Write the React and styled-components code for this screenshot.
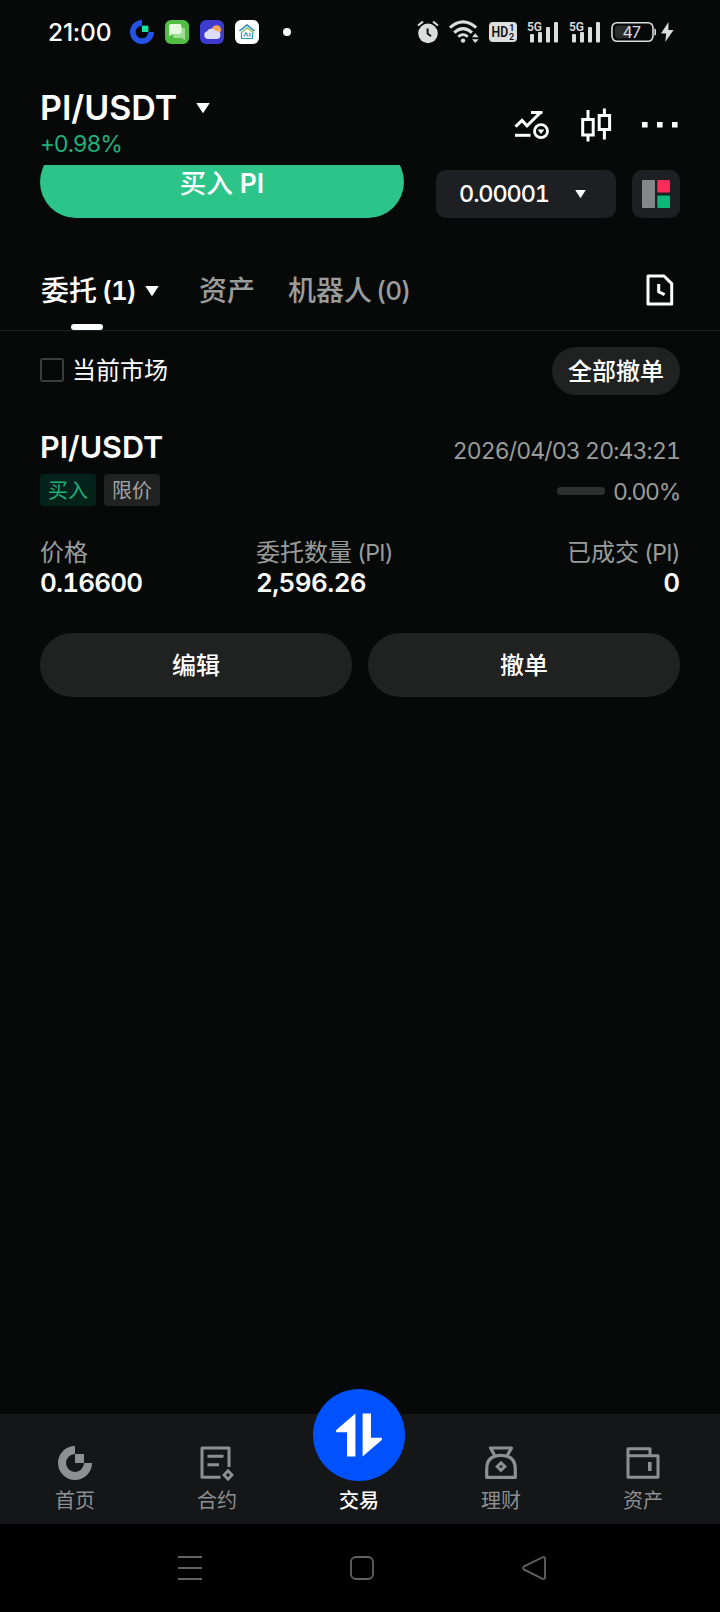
import React from "react";
import styled, { createGlobalStyle } from "styled-components";

const GlobalStyle = createGlobalStyle`
  * { box-sizing: border-box; }
  body {
    margin: 0;
    background: #060908;
    color: #fff;
    font-family: Inter, "Noto Sans CJK SC", sans-serif;
    font-variant-numeric: tabular-nums;
  }
  svg { display: block; flex: none; overflow: visible; }
  button { font: inherit; color: inherit; border: 0; padding: 0; background: none; }
`;

const Screen = styled.div`
  display: flex;
  flex-direction: column;
  width: 720px;
  height: 1612px;
  overflow: hidden;
  background: #060908;
`;

const Text = styled.span`
  display: block;
  white-space: nowrap;
  font-size: ${(p) => p.$size}px;
  line-height: ${(p) => p.$line || 32}px;
  font-weight: ${(p) => p.$weight || 400};
  color: ${(p) => p.$color || "#fff"};
  letter-spacing: ${(p) => p.$track || 0}px;
  padding-top: ${(p) => p.$drop || 0}px;
`;

/* Latin run that follows Chinese text in the same label */
const Latin = styled.span`
  margin-left: ${(p) => p.$gap}px;
  font-size: ${(p) => p.$size}px;
  font-weight: ${(p) => p.$weight || "inherit"};
  letter-spacing: ${(p) => p.$track || 0}px;
  vertical-align: ${(p) => p.$rise || 0}px;
  line-height: 1;
`;

/* Status bar */
const StatusBar = styled.div`
  display: flex;
  align-items: center;
  justify-content: space-between;
  height: 64px;
  padding: 0 45px 0 48px;
`;

const Clock = styled(Text)`
  width: 82px;
  font-variant-numeric: normal;
`;

const StatusGroup = styled.div`
  display: flex;
  align-items: center;
  gap: ${(p) => p.$gap}px;
`;

const NoticeDot = styled.i`
  width: 8px;
  height: 8px;
  margin-left: 13px;
  border-radius: 50%;
  background: #fff;
`;

/* Header */
const Header = styled.header`
  display: flex;
  justify-content: space-between;
  height: 101px;
  padding: 24px 42px 0 40px;
`;

const PairRow = styled.div`
  display: flex;
  align-items: center;
  gap: 19px;
`;

const HeaderActions = styled.div`
  display: flex;
  align-items: center;
  gap: 30px;
  height: 36px;
  margin-top: 19px;
`;

const Caret = ({ width, height }) => (
  <svg width={width} height={height} viewBox="0 0 14 10" preserveAspectRatio="none">
    <path d="M0.3 0H13.7L7.6 9.4Q7 10 6.4 9.4Z" fill="#fff" />
  </svg>
);

/* Order form strip, scrolled under the header */
const FormStrip = styled.section`
  display: flex;
  align-items: flex-end;
  height: 53px;
  padding: 0 40px;
  overflow: hidden;
`;

const BuyButton = styled.button`
  flex: none;
  display: flex;
  align-items: center;
  justify-content: center;
  width: 364px;
  height: 72px;
  margin-right: 32px;
  border-radius: 36px;
  background: #2dc489;
`;

const Select = styled.div`
  display: flex;
  align-items: center;
  justify-content: space-between;
  width: 180px;
  height: 48px;
  margin-right: 16px;
  padding: 0 30px 0 23px;
  border-radius: 10px;
  background: #1e1f23;
`;

const BookToggle = styled.button`
  display: flex;
  align-items: center;
  justify-content: center;
  width: 48px;
  height: 48px;
  border-radius: 10px;
  background: #1e1f23;
`;

/* Tabs */
const Tabs = styled.nav`
  display: flex;
  align-items: flex-start;
  height: 113px;
  padding: 53px 46px 0 41px;
  border-bottom: 1px solid #1d201f;
`;

const Tab = styled.div`
  display: flex;
  flex-direction: column;
  width: ${(p) => p.$width}px;
`;

const TabLabel = styled.div`
  display: flex;
  align-items: center;
  gap: 9px;
  height: 40px;
`;

const TabIndicator = styled.i`
  width: 32px;
  height: 6px;
  margin: 13px 0 0 30px;
  border-radius: 3px;
  background: #fff;
`;

const HistoryButton = styled.button`
  margin: 3px 0 0 auto;
`;

/* Orders */
const Orders = styled.main`
  flex: 1;
  padding: 16px 40px 0;
`;

const FilterRow = styled.div`
  display: flex;
  align-items: center;
  justify-content: space-between;
  height: 48px;
`;

const CheckLabel = styled.label`
  display: flex;
  align-items: center;
  gap: 8px;
`;

const CheckBox = styled.i`
  width: 24px;
  height: 24px;
  margin-top: -2px;
  border: 2px solid #3b3d3c;
  border-radius: 3px;
`;

const Pill = styled.button`
  display: flex;
  align-items: center;
  justify-content: center;
  flex: ${(p) => (p.$width ? "none" : "1")};
  width: ${(p) => (p.$width ? `${p.$width}px` : "auto")};
  height: ${(p) => p.$height}px;
  border-radius: 32px;
  background: #202221;
`;

const OrderHead = styled.div`
  display: flex;
  justify-content: space-between;
  height: 111px;
  padding-top: 34px;
`;

const Badges = styled.div`
  display: flex;
  gap: 8px;
  margin-top: 9px;
`;

const Badge = styled.span`
  width: 56px;
  height: 32px;
  border-radius: 4px;
  text-align: center;
  font-size: 20px;
  line-height: 34px;
  color: ${(p) => (p.$buy ? "#21b07c" : "#a0a2a1")};
  background: ${(p) => (p.$buy ? "#02221a" : "#212322")};
`;

const OrderMeta = styled.div`
  display: flex;
  flex-direction: column;
  align-items: flex-end;
  gap: 9px;
  padding-top: 5px;
`;

const Progress = styled.div`
  display: flex;
  align-items: center;
  gap: 8px;
`;

const ProgressTrack = styled.i`
  width: 48px;
  height: 8px;
  margin-top: -3px;
  border-radius: 4px;
  background: #2e3030;
`;

const Metrics = styled.div`
  display: grid;
  grid-template-columns: 216px 1fr auto;
  margin-top: 31px;
`;

const Metric = styled.div`
  text-align: ${(p) => (p.$end ? "right" : "left")};
`;

const Actions = styled.div`
  display: flex;
  gap: 16px;
  margin-top: 36px;
`;

/* Bottom navigation */
const BottomNav = styled.nav`
  display: grid;
  grid-template-columns: repeat(5, 142px);
  grid-template-rows: 110px;
  height: 110px;
  padding-left: 4px;
  background: #141617;
`;

const NavItem = styled.div`
  display: flex;
  flex-direction: column;
  align-items: center;
  justify-content: flex-end;
  gap: ${(p) => p.$gap || 5}px;
  padding-bottom: 7px;
`;

const TradeDisc = styled.div`
  display: flex;
  flex: none;
  align-items: center;
  justify-content: center;
  width: 92px;
  height: 92px;
  border-radius: 50%;
  background: #0052ff;
`;

const SystemNav = styled.footer`
  display: flex;
  align-items: center;
  gap: 148px;
  height: 88px;
  padding-left: 178px;
  background: #000;
`;

const BrandMark = ({ size, ring, square }) => (
  <svg width={size} height={size} viewBox="0 0 34 34">
    <path d="M17 0A17 17 0 1 0 34 17H26A9 9 0 1 1 17 8Z" fill={ring} />
    <path d="M17 8H26V17H17Z" fill={square} />
  </svg>
);

const MessagesIcon = () => (
  <svg width="24" height="24" viewBox="0 0 24 24">
    <rect width="24" height="24" rx="6" fill="#51bd42" />
    <path d="M11 8H19Q20 8 20 9V20L16.5 18H10Q8 18 8 16V11Z" fill="#9edc94" />
    <path d="M6 4H14.5Q16.5 4 16.5 6V12Q16.5 14 14.5 14H8L4 16V6Q4 4 6 4Z" fill="#e6f8e0" />
  </svg>
);

const WeatherIcon = () => (
  <svg width="24" height="24" viewBox="0 0 24 24">
    <rect width="24" height="24" rx="6" fill="#3d3bd0" />
    <circle cx="16.5" cy="9.8" r="4.6" fill="#f7a552" />
    <path d="M8 19A4 4 0 0 1 7 11.2A5 5 0 0 1 15.8 11A4 4 0 0 1 17 19Z" fill="#dedcf6" />
  </svg>
);

const HomeAiIcon = () => (
  <svg width="24" height="24" viewBox="0 0 24 24" fill="none">
    <rect width="24" height="24" rx="6" fill="#fff" />
    <path d="M4.5 11L12 5L19.5 11" stroke="#2b83c4" strokeWidth="1.6" />
    <path d="M7 12L12 8L19 13" stroke="#8cbf58" strokeWidth="1.5" />
    <path d="M6.5 12V18.5H17.5V13" stroke="#2f9fc0" strokeWidth="1.2" />
    <path d="M8.8 16.5L11 12.8L13.2 16.5M15 12.8V16.5" stroke="#2b83c4" strokeWidth="1.1" />
  </svg>
);

const AlarmIcon = () => (
  <svg width="22" height="24" viewBox="0 0 22 24" fill="none">
    <circle cx="11" cy="13.4" r="9.8" fill="#dcdedd" />
    <path d="M1 5.5L6 1.6M21 5.5L16 1.6" stroke="#dcdedd" strokeWidth="2" />
    <path d="M10.6 8.5V13.6L14 16.3" stroke="#111" strokeWidth="2" />
  </svg>
);

const WifiIcon = () => (
  <svg width="30" height="24" viewBox="0 0 30 24" fill="none" stroke="#dcdedd" strokeWidth="3">
    <path d="M1 7.7Q14 -4 27.2 7.7" />
    <path d="M5.2 12.6Q14 4.6 23 12.6" />
    <path d="M9.2 16.8Q14 12.6 18.8 16.8" strokeWidth="2.6" />
    <circle cx="14" cy="20.6" r="2.2" fill="#dcdedd" stroke="none" />
    <path d="M23 17.2L26.3 13.2L29.6 17.2ZM23 19.2H29.6L26.3 23Z" fill="#dcdedd" stroke="none" />
  </svg>
);

const HdIcon = () => (
  <svg width="28" height="20" viewBox="0 0 28 20">
    <rect width="28" height="20" rx="4" fill="#dcdedd" />
    <g fill="#111" fontFamily="Roboto, sans-serif" fontWeight="600">
      <text x="2.6" y="15.4" fontSize="15" textLength="16.6" lengthAdjust="spacingAndGlyphs">HD</text>
      <text x="20.2" y="9.2" fontSize="9">1</text>
      <text x="20" y="17.8" fontSize="9">2</text>
    </g>
  </svg>
);

const SignalIcon = () => (
  <svg width="32" height="24" viewBox="0 0 32 24" fill="#dcdedd">
    <text
      x="0"
      y="10.8"
      fontSize="13.5"
      fontFamily="Roboto, sans-serif"
      fontWeight="600"
      textLength="15"
      lengthAdjust="spacingAndGlyphs"
    >
      5G
    </text>
    <rect x="3" y="14" width="4" height="8.5" rx="1" />
    <rect x="11" y="12" width="4" height="10.5" rx="1" />
    <rect x="19" y="7" width="4" height="15.5" rx="1" />
    <rect x="27" y="2" width="4" height="20.5" rx="1" />
  </svg>
);

const BatteryIcon = () => (
  <svg width="64" height="22" viewBox="0 0 64 22">
    <rect x="1" y="1.7" width="41" height="18.6" rx="5" fill="none" stroke="#dcdedd" strokeWidth="1.6" />
    <path d="M7 4.4H18V17.6H7Q4 17.6 4 14.6V7.4Q4 4.4 7 4.4Z" fill="#2b2d2d" />
    <path d="M43.4 7.5Q45 7.5 45 9V13Q45 14.5 43.4 14.5Z" fill="#dcdedd" />
    <text x="11.5" y="16.6" fontSize="16" fill="#dcdedd" fontFamily="Inter, sans-serif" textLength="19">47</text>
    <path d="M57.5 1L50 12.6H55.2L54.2 21L62.6 9H57.4Z" fill="#dcdedd" />
  </svg>
);

const AlertChartIcon = () => (
  <svg width="36" height="36" viewBox="0 0 36 36" fill="none" stroke="#fff" strokeWidth="3">
    <path d="M1.5 19.7L8 13.5L13 18.8L26 6M17 5.5H28.5" />
    <path d="M1 28.3H16.5" />
    <circle cx="27" cy="24.2" r="6.5" strokeWidth="2.8" />
    <path d="M23.6 22.4H30.4L27 27Z" fill="#fff" stroke="none" />
  </svg>
);

const CandlesIcon = () => (
  <svg width="32" height="36" viewBox="0 0 32 36" fill="none" stroke="#fff" strokeWidth="3">
    <path d="M2.7 12.6H13.2V28H2.7ZM8 3V12M8 28V34.5" />
    <path d="M19.2 8.4H29.6V22.6H19.2ZM24.4 1.5V8M24.4 23V32.5" />
  </svg>
);

const MoreIcon = () => (
  <svg width="36" height="6" viewBox="0 0 36 6" fill="#fff">
    <path d="M0 0H5.6V5.6H0ZM15 0H20.6V5.6H15ZM30 0H35.6V5.6H30Z" />
  </svg>
);

const BookIcon = () => (
  <svg width="28" height="28" viewBox="0 0 28 28">
    <rect width="13" height="28" rx="1" fill="#84868a" />
    <rect x="15.3" width="12.7" height="12.5" rx="1" fill="#fa2d5a" />
    <rect x="15.3" y="15.5" width="12.7" height="12.5" rx="1" fill="#0cb877" />
  </svg>
);

const HistoryIcon = () => (
  <svg width="28" height="33" viewBox="0 0 28 33" fill="none" stroke="#fff" strokeWidth="3">
    <path d="M2 2H18L25.7 9.6V30H2Z" strokeLinejoin="round" />
    <path d="M12.7 10V17.8L18.6 20.7" />
  </svg>
);

const ContractIcon = () => (
  <svg width="34" height="34" viewBox="0 0 34 34" fill="none" stroke="#8d8f91" strokeWidth="3">
    <path d="M29 21V2H2V31.3H20.5" strokeLinejoin="round" />
    <path d="M7.5 10.2H23.5M7.5 18.7H19" />
    <path d="M28 24.8L32 29L28 33.2L24 29Z" strokeWidth="2.8" />
  </svg>
);

const TradeIcon = () => (
  <svg width="48" height="44" viewBox="0 0 48 44" fill="#fff">
    <path d="M20.4 0.5V43.5H12V19.3H1.8Q0.2 18.5 1.3 17Z" />
    <path d="M27.6 43.5V0.5H36V24.7H46.2Q47.8 25.5 46.7 27Z" />
  </svg>
);

const EarnIcon = () => (
  <svg width="34" height="34" viewBox="0 0 34 34" fill="none" stroke="#8d8f91" strokeWidth="3.2">
    <path d="M10.5 9L6.5 2H27.5L23.5 9" strokeLinejoin="round" />
    <path d="M2.7 31.4V23Q2.7 9.3 17 9.3T31.3 23V31.4Z" strokeLinejoin="round" />
    <path d="M17 16.8L20.8 20.6L17 24.4L13.2 20.6Z" strokeWidth="3" />
  </svg>
);

const WalletIcon = () => (
  <svg width="34" height="34" viewBox="0 0 34 34" fill="none" stroke="#8d8f91" strokeWidth="3">
    <path d="M2 9.8H32V31.3H2Z" strokeLinejoin="round" />
    <path d="M2 10V2.8H24V9.5" strokeLinejoin="round" />
    <path d="M23.8 16V25" strokeWidth="3.6" />
  </svg>
);

const RecentsIcon = () => (
  <svg width="24" height="24" viewBox="0 0 24 24" stroke="#626262" strokeWidth="2">
    <path d="M0 1H24M0 12H24M0 23H24" />
  </svg>
);

const HomeKeyIcon = () => (
  <svg width="24" height="24" viewBox="0 0 24 24" fill="none" stroke="#626262" strokeWidth="1.8">
    <rect x="1" y="1" width="22" height="22" rx="5" />
  </svg>
);

const BackKeyIcon = () => (
  <svg width="24" height="24" viewBox="0 0 24 24" fill="none" stroke="#626262" strokeWidth="1.8">
    <path d="M20.6 1.2L1.7 10.6Q0.3 12 1.7 13.4L20.6 22.8Q23 23.4 23 21.4V2.6Q23 0.6 20.6 1.2Z" />
  </svg>
);

const grey = "#9a9c9b";
const navGrey = "#8d8f91";

export default function App() {
  return (
    <Screen>
      <GlobalStyle />
      <StatusBar>
        <StatusGroup $gap={0}>
          <Clock $size={24.5} $weight={500} $track={-0.2}>21:00</Clock>
          <StatusGroup $gap={11}>
            <BrandMark size={24} ring="#2354e6" square="#17e5a1" />
            <MessagesIcon />
            <WeatherIcon />
            <HomeAiIcon />
            <NoticeDot />
          </StatusGroup>
        </StatusGroup>
        <StatusGroup $gap={10}>
          <AlarmIcon />
          <WifiIcon />
          <HdIcon />
          <SignalIcon />
          <SignalIcon />
          <BatteryIcon />
        </StatusGroup>
      </StatusBar>

      <Header>
        <div>
          <PairRow>
            <Text $size={34} $line={39} $weight={600}>PI/USDT</Text>
            <Caret width={14} height={10} />
          </PairRow>
          <Text $size={23} $line={33} $drop={1} $track={-1.1} $color="#21b07c">+0.98%</Text>
        </div>
        <HeaderActions>
          <AlertChartIcon />
          <CandlesIcon />
          <MoreIcon />
        </HeaderActions>
      </Header>

      <FormStrip>
        <BuyButton>
          <Text $size={26.5} $drop={1} $weight={500}>
            买入<Latin $gap={7} $size={26.5} $weight={600}>PI</Latin>
          </Text>
        </BuyButton>
        <Select>
          <Text $size={23.5} $weight={500} $track={-1.1}>0.00001</Text>
          <Caret width={11} height={8} />
        </Select>
        <BookToggle><BookIcon /></BookToggle>
      </FormStrip>

      <Tabs>
        <Tab $width={158}>
          <TabLabel>
            <Text $size={28} $weight={500}>
              委托<Latin $gap={5} $size={26} $track={-1.2} $weight={600} $rise={1}>(1)</Latin>
            </Text>
            <Caret width={14} height={10} />
          </TabLabel>
          <TabIndicator />
        </Tab>
        <Tab $width={89}>
          <TabLabel><Text $size={28} $weight={500} $color={grey}>资产</Text></TabLabel>
        </Tab>
        <Tab $width={130}>
          <TabLabel>
            <Text $size={28} $weight={500} $color={grey}>
              机器人<Latin $gap={4} $size={26} $track={-1} $rise={1}>(0)</Latin>
            </Text>
          </TabLabel>
        </Tab>
        <HistoryButton><HistoryIcon /></HistoryButton>
      </Tabs>

      <Orders>
        <FilterRow>
          <CheckLabel>
            <CheckBox />
            <Text $size={24}>当前市场</Text>
          </CheckLabel>
          <Pill $width={128} $height={48}>
            <Text $size={24} $drop={1} $weight={500}>全部撤单</Text>
          </Pill>
        </FilterRow>

        <OrderHead>
          <div>
            <Text $size={30.5} $line={36} $weight={600}>PI/USDT</Text>
            <Badges>
              <Badge $buy>买入</Badge>
              <Badge>限价</Badge>
            </Badges>
          </div>
          <OrderMeta>
            <Text $size={23} $drop={1} $color={grey} $track={-0.87}>2026/04/03 20:43:21</Text>
            <Progress>
              <ProgressTrack />
              <Text $size={23} $color={grey} $track={-1.3}>0.00%</Text>
            </Progress>
          </OrderMeta>
        </OrderHead>

        <Metrics>
          <Metric>
            <Text $size={24} $color={grey}>价格</Text>
            <Text $size={26} $line={28} $weight={600} $track={-0.8}>0.16600</Text>
          </Metric>
          <Metric>
            <Text $size={24} $color={grey}>
              委托数量<Latin $gap={5} $size={23} $track={-0.7}>(PI)</Latin>
            </Text>
            <Text $size={26} $line={28} $weight={600} $track={-0.6}>2,596.26</Text>
          </Metric>
          <Metric $end>
            <Text $size={24} $color={grey}>
              已成交<Latin $gap={5} $size={23} $track={-0.7}>(PI)</Latin>
            </Text>
            <Text $size={26} $line={28} $weight={600}>0</Text>
          </Metric>
        </Metrics>

        <Actions>
          <Pill $height={64}><Text $size={24} $drop={2} $weight={500}>编辑</Text></Pill>
          <Pill $height={64}><Text $size={24} $drop={2} $weight={500}>撤单</Text></Pill>
        </Actions>
      </Orders>

      <BottomNav>
        <NavItem>
          <BrandMark size={34} ring={navGrey} square={navGrey} />
          <Text $size={20} $color={navGrey}>首页</Text>
        </NavItem>
        <NavItem>
          <ContractIcon />
          <Text $size={20} $color={navGrey}>合约</Text>
        </NavItem>
        <NavItem $gap={4}>
          <TradeDisc><TradeIcon /></TradeDisc>
          <Text $size={20} $weight={500}>交易</Text>
        </NavItem>
        <NavItem>
          <EarnIcon />
          <Text $size={20} $color={navGrey}>理财</Text>
        </NavItem>
        <NavItem>
          <WalletIcon />
          <Text $size={20} $color={navGrey}>资产</Text>
        </NavItem>
      </BottomNav>

      <SystemNav>
        <RecentsIcon />
        <HomeKeyIcon />
        <BackKeyIcon />
      </SystemNav>
    </Screen>
  );
}
